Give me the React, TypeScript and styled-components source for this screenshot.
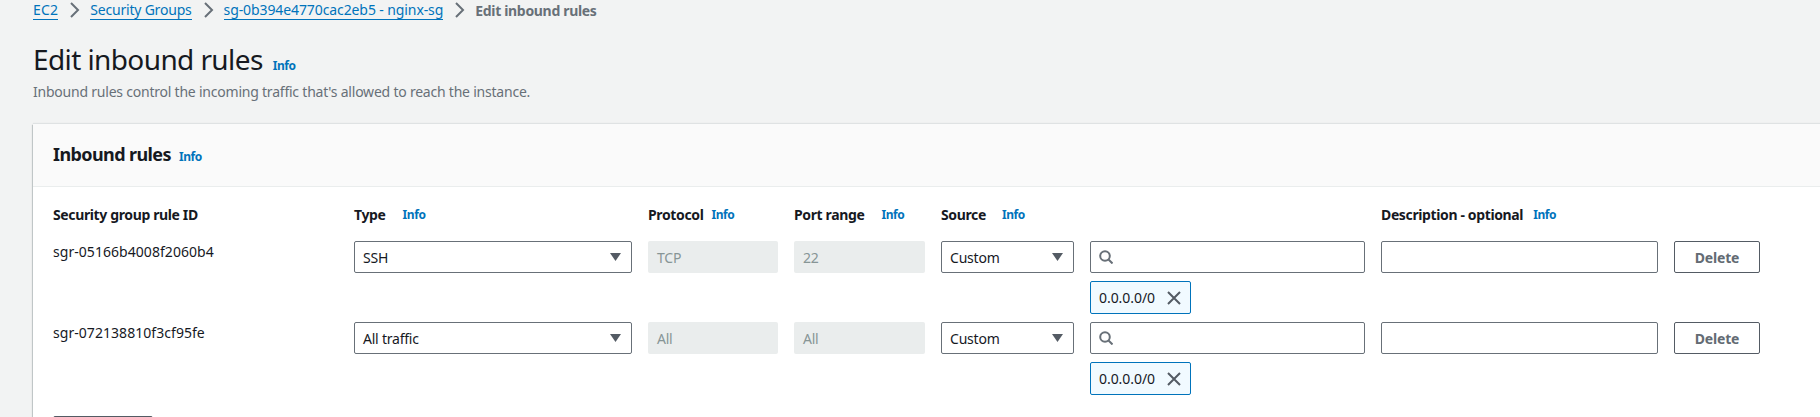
import React from 'react';
import styled, { createGlobalStyle } from 'styled-components';

const GlobalStyle = createGlobalStyle`
    html, body {
        margin: 0;
        padding: 0;
        background: #f2f3f3;
        overflow: hidden;
    }
    * {
        box-sizing: border-box;
    }
`;

const Page = styled.div`
    width: 1820px;
    height: 417px;
    overflow: hidden;
    background: #f2f3f3;
    font-family: 'Noto Sans', 'Open Sans', sans-serif;
    font-size: 14px;
    letter-spacing: -0.22px;
    color: #16191f;
    padding-left: 33px;
`;

const Crumbs = styled.nav`
    display: flex;
    align-items: center;
    height: 20px;
`;

const CrumbLink = styled.a<{ $spacing?: number }>`
    color: #0073bb;
    font-size: 14px;
    letter-spacing: ${(props) => props.$spacing ?? -0.2}px;
    line-height: 18px;
    border-bottom: 1px solid #0073bb;
`;

const CrumbCurrent = styled.span`
    color: #687078;
    font-size: 14px;
    font-weight: 700;
    letter-spacing: -0.32px;
`;

const CrumbSep = styled.svg`
    width: 16px;
    height: 16px;
    margin: 0 8px;
    fill: none;
    stroke: #687078;
    stroke-width: 2;
`;

const TitleRow = styled.div`
    display: flex;
    align-items: baseline;
    gap: 10px;
    margin-top: 21px;
`;

const Title = styled.h1`
    margin: 0;
    font-size: 28px;
    font-weight: 400;
    letter-spacing: -0.6px;
    line-height: 36px;
`;

const Info = styled.a<{ $gap?: number }>`
    color: #0073bb;
    font-size: 12px;
    font-weight: 700;
    letter-spacing: -0.4px;
    margin-left: ${(props) => props.$gap ?? 0}px;
`;

const Subtitle = styled.p`
    margin: 5px 0 0;
    color: #687078;
    font-size: 14px;
    line-height: 20px;
`;

const Panel = styled.section`
    margin-top: 22px;
    height: 300px;
    background: #fff;
    box-shadow: 0 1px 1px 0 rgba(0, 28, 36, 0.3), -1px 1px 1px 0 rgba(0, 28, 36, 0.15),
        0 -1px 1px 0 rgba(0, 28, 36, 0.08);
`;

const PanelHeader = styled.header`
    display: flex;
    align-items: baseline;
    gap: 8px;
    height: 63px;
    padding: 18px 20px 0;
    background: #fafafa;
    border-bottom: 1px solid #eaeded;
`;

const PanelTitle = styled.h2`
    margin: 0;
    font-size: 18px;
    font-weight: 700;
    letter-spacing: -0.6px;
    line-height: 24px;
`;

const Rules = styled.div`
    display: grid;
    grid-template-columns: 285px 278px 130px 131px 133px 275px 277px 86px;
    column-gap: 16px;
    padding: 17px 0 0 20px;
`;

const HeadCell = styled.div`
    display: flex;
    align-items: center;
    height: 20px;
    margin-bottom: 17px;
    font-weight: 700;
    font-size: 14px;
    letter-spacing: -0.37px;
`;

const RuleId = styled.div`
    height: 81px;
    line-height: 22px;
    letter-spacing: 0.05px;
`;

const Stack = styled.div`
    display: flex;
    flex-direction: column;
    gap: 8px;
    height: 81px;
`;

const Field = styled.div`
    display: flex;
    align-items: center;
    height: 32px;
    padding: 0 8px;
    background: #fff;
    border: 1px solid #687078;
    border-radius: 2px;
`;

const SelectField = styled(Field)`
    justify-content: space-between;
    padding-right: 10px;
`;

const Caret = styled.svg`
    width: 11px;
    height: 8px;
    fill: #545b64;
    margin-top: -1px;
`;

const Disabled = styled.div`
    display: flex;
    align-items: center;
    height: 32px;
    padding: 0 9px;
    color: #879596;
    background: #eaeded;
    border-radius: 2px;
`;

const SearchIcon = styled.svg`
    width: 14px;
    height: 14px;
    fill: none;
    stroke: #687078;
    stroke-width: 2;
`;

const Token = styled.div`
    display: inline-flex;
    align-items: center;
    justify-content: space-between;
    width: 101px;
    height: 33px;
    padding: 0 9px 0 8px;
    background: #f1faff;
    border: 1px solid #0073bb;
    border-radius: 2px;
    letter-spacing: -0.05px;
`;

const TokenClose = styled.svg`
    width: 14px;
    height: 14px;
    fill: none;
    stroke: #545b64;
    stroke-width: 2;
`;

const DeleteBtn = styled.button`
    height: 32px;
    padding: 0;
    background: #fff;
    border: 1px solid #545b64;
    border-radius: 2px;
    color: #636b73;
    font-family: inherit;
    font-size: 14px;
    font-weight: 700;
    letter-spacing: -0.2px;
`;

const AddBtn = styled.div`
    width: 100px;
    height: 32px;
    margin: 13px 0 0 20px;
    border: 1px solid #545b64;
    border-radius: 2px;
`;

interface Rule {
    id: string;
    type: string;
    protocol: string;
    port: string;
}

const rules: Rule[] = [
    { id: 'sgr-05166b4008f2060b4', type: 'SSH', protocol: 'TCP', port: '22' },
    { id: 'sgr-072138810f3cf95fe', type: 'All traffic', protocol: 'All', port: 'All' },
];

const Chevron = () => (
    <CrumbSep viewBox="0 0 16 16">
        <path d="M5 1l7 7-7 7" />
    </CrumbSep>
);

const Select = ({ value }: { value: string }) => (
    <SelectField>
        {value}
        <Caret viewBox="0 0 11 8">
            <path d="M0 0h11L5.5 8z" />
        </Caret>
    </SelectField>
);

const App: React.FC = () => (
    <Page>
        <GlobalStyle />
        <Crumbs>
            <CrumbLink $spacing={0.2}>EC2</CrumbLink>
            <Chevron />
            <CrumbLink>Security Groups</CrumbLink>
            <Chevron />
            <CrumbLink $spacing={-0.1}>sg-0b394e4770cac2eb5 - nginx-sg</CrumbLink>
            <Chevron />
            <CrumbCurrent>Edit inbound rules</CrumbCurrent>
        </Crumbs>
        <TitleRow>
            <Title>Edit inbound rules</Title>
            <Info>Info</Info>
        </TitleRow>
        <Subtitle>Inbound rules control the incoming traffic that's allowed to reach the instance.</Subtitle>
        <Panel>
            <PanelHeader>
                <PanelTitle>Inbound rules</PanelTitle>
                <Info>Info</Info>
            </PanelHeader>
            <Rules>
                <HeadCell>Security group rule ID</HeadCell>
                <HeadCell>
                    Type<Info $gap={17}>Info</Info>
                </HeadCell>
                <HeadCell>
                    Protocol<Info $gap={8}>Info</Info>
                </HeadCell>
                <HeadCell>
                    Port range<Info $gap={17}>Info</Info>
                </HeadCell>
                <HeadCell>
                    Source<Info $gap={16}>Info</Info>
                </HeadCell>
                <HeadCell />
                <HeadCell>
                    Description - optional<Info $gap={10}>Info</Info>
                </HeadCell>
                <HeadCell />
                {rules.map((rule) => (
                    <React.Fragment key={rule.id}>
                        <RuleId>{rule.id}</RuleId>
                        <Stack>
                            <Select value={rule.type} />
                        </Stack>
                        <Stack>
                            <Disabled>{rule.protocol}</Disabled>
                        </Stack>
                        <Stack>
                            <Disabled>{rule.port}</Disabled>
                        </Stack>
                        <Stack>
                            <Select value="Custom" />
                        </Stack>
                        <Stack>
                            <Field>
                                <SearchIcon viewBox="0 0 14 14">
                                    <circle cx="6" cy="6" r="4.8" />
                                    <path d="M9.5 9.5l4 4" />
                                </SearchIcon>
                            </Field>
                            <Token>
                                0.0.0.0/0
                                <TokenClose viewBox="0 0 14 14">
                                    <path d="M1 1l12 12M13 1L1 13" />
                                </TokenClose>
                            </Token>
                        </Stack>
                        <Stack>
                            <Field />
                        </Stack>
                        <Stack>
                            <DeleteBtn>Delete</DeleteBtn>
                        </Stack>
                    </React.Fragment>
                ))}
            </Rules>
            <AddBtn />
        </Panel>
    </Page>
);

export default App;
